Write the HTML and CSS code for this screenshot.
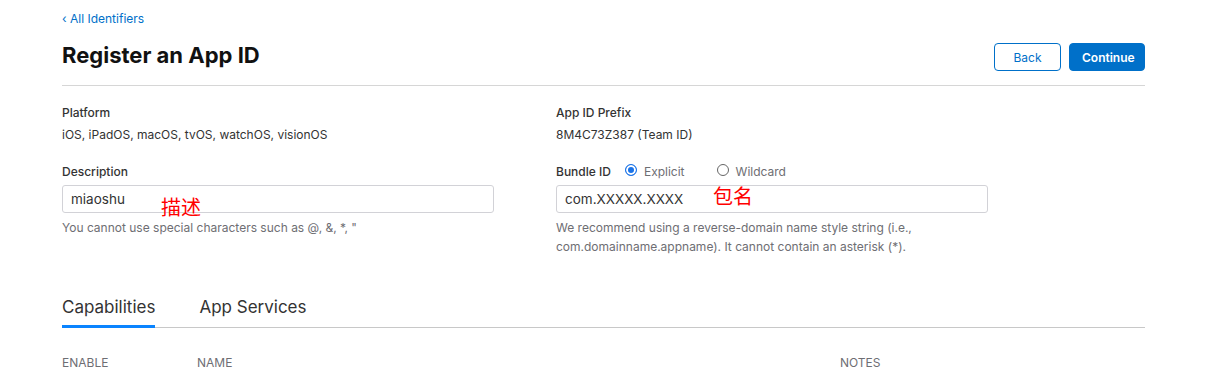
FILE: index.html
```html
<!DOCTYPE html>
<html lang="en">
<head>
  <meta charset="UTF-8">
  <title>Register an App ID</title>
  <link rel="stylesheet" href="styles.css">
</head>
<body>
  <div class="page">
    <a class="back-link" href="#">&lsaquo; All Identifiers</a>

    <div class="header">
      <h1>Register an App ID</h1>
      <div class="actions">
        <button class="btn btn-outline">Back</button>
        <button class="btn btn-primary">Continue</button>
      </div>
    </div>

    <div class="form-grid">
      <div class="field">
        <div class="label">Platform</div>
        <div class="value">iOS, iPadOS, macOS, tvOS, watchOS, visionOS</div>
      </div>
      <div class="field">
        <div class="label">App ID Prefix</div>
        <div class="value">8M4C73Z387 (Team ID)</div>
      </div>

      <div class="field">
        <div class="label">Description</div>
        <div class="input-wrap">
          <input class="text-input" type="text" value="miaoshu">
          <span class="note note-desc">描述</span>
        </div>
        <div class="hint">You cannot use special characters such as @, &amp;, *, "</div>
      </div>
      <div class="field">
        <div class="label label-row">
          Bundle ID
          <label class="radio"><span class="dot checked"></span>Explicit</label>
          <label class="radio"><span class="dot"></span>Wildcard</label>
        </div>
        <div class="input-wrap">
          <input class="text-input" type="text" value="com.XXXXX.XXXX">
          <span class="note note-bundle">包名</span>
        </div>
        <div class="hint">We recommend using a reverse-domain name style string (i.e.,<br>com.domainname.appname). It cannot contain an asterisk (*).</div>
      </div>
    </div>

    <div class="tabs">
      <div class="tab active">Capabilities</div>
      <div class="tab">App Services</div>
    </div>

    <div class="table-head">
      <div class="col-enable">ENABLE</div>
      <div class="col-name">NAME</div>
      <div class="col-notes">NOTES</div>
    </div>
  </div>
</body>
</html>
```

FILE: styles.css
```css
* {
  box-sizing: border-box;
}

body {
  margin: 0;
  background: #ffffff;
  font-family: 'Inter', 'Noto Sans', sans-serif;
  color: #1d1d1f;
}

.page {
  width: 1083px;
  margin-left: 62px;
  padding-top: 11px;
}

.back-link {
  display: block;
  color: #0070c9;
  font-size: 12px;
  line-height: 16px;
  text-decoration: none;
}

.header {
  display: flex;
  justify-content: space-between;
  align-items: flex-end;
  padding: 12px 0 14px;
  border-bottom: 1px solid #d6d6d6;
}

.header h1 {
  margin: 0;
  font-size: 22px;
  line-height: 32px;
  font-weight: 700;
  color: #111;
}

.actions {
  display: flex;
  gap: 8px;
}

.btn {
  height: 28px;
  border-radius: 4px;
  font-family: inherit;
  font-size: 12px;
  padding: 0 12px;
  cursor: pointer;
}

.btn-outline {
  width: 67px;
  background: #fff;
  color: #0070c9;
  border: 1px solid #0070c9;
}

.btn-primary {
  width: 76px;
  background: #0070c9;
  color: #fff;
  border: 1px solid #0070c9;
  font-weight: 600;
}

.form-grid {
  display: grid;
  grid-template-columns: 494px 1fr;
  row-gap: 19px;
  padding-top: 18px;
}

.label {
  font-size: 12px;
  line-height: 18px;
  font-weight: 500;
  color: #333;
}

.label-row {
  display: flex;
  align-items: center;
}

.radio {
  display: flex;
  align-items: center;
  font-weight: 400;
  color: #6e6e73;
  margin-left: 14px;
}

.radio + .radio {
  margin-left: 32px;
}

.dot {
  width: 12px;
  height: 12px;
  border-radius: 50%;
  border: 1px solid #666;
  margin-right: 7px;
  position: relative;
  top: -2px;
}

.dot.checked {
  border: 1px solid #1a73e8;
  background: #1a73e8;
  box-shadow: inset 0 0 0 2px #fff;
}

.value {
  font-size: 12px;
  line-height: 18px;
  color: #333;
  margin-top: 4px;
}

.input-wrap {
  position: relative;
  width: 432px;
  margin-top: 4px;
}

.text-input {
  width: 432px;
  height: 28px;
  border: 1px solid #d2d2d7;
  border-radius: 3px;
  padding: 0 8px;
  font-family: inherit;
  font-size: 13.5px;
  color: #333;
}

.note {
  position: absolute;
  color: #ff0000;
  font-family: 'Noto Sans CJK SC', sans-serif;
  font-size: 20px;
  line-height: 22px;
}

.note-desc {
  left: 99px;
  top: 11px;
}

.note-bundle {
  left: 157px;
  top: 0;
}

.hint {
  font-size: 12px;
  line-height: 19px;
  color: #6e6e73;
  margin-top: 5px;
}

.tabs {
  display: flex;
  gap: 44px;
  margin-top: 40px;
  border-bottom: 1px solid #c8c8c8;
}

.tab {
  font-size: 17px;
  line-height: 22px;
  padding-bottom: 7px;
  color: #333;
}

.tab.active {
  border-bottom: 3px solid #0a84ff;
  margin-bottom: -1px;
}

.table-head {
  display: flex;
  font-size: 12px;
  color: #6e6e73;
  margin-top: 27px;
}

.col-enable {
  width: 135px;
}

.col-name {
  width: 643px;
}
```
